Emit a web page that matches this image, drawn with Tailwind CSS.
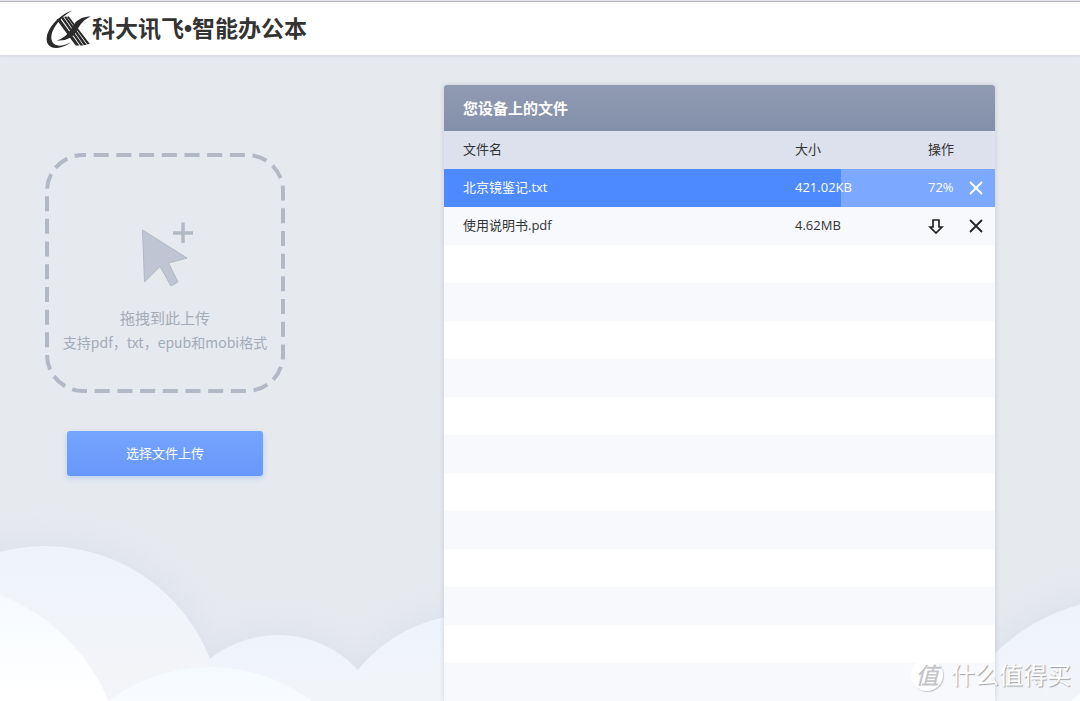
<!DOCTYPE html>
<html lang="zh-CN">
<head>
<meta charset="utf-8">
<meta name="viewport" content="width=device-width, initial-scale=1">
<title>科大讯飞•智能办公本</title>
<script src="https://cdn.jsdelivr.net/npm/@tailwindcss/browser@4"></script>
</head>
<body class="relative flex h-screen flex-col overflow-hidden bg-[#e6e9ee] pt-px font-['Open_Sans','Noto_Sans_CJK_SC',sans-serif] text-[13px] leading-5 text-[#333]">

<header class="z-10 flex h-[54px] shrink-0 items-center border-t border-[#b5b5b5] bg-white pl-[44px] shadow-[0_1px_3px_rgba(120,130,150,0.2)]">
  <a href="#" class="flex items-center">
    <svg class="h-10 w-12" viewBox="10 5 144 126" fill="#2b2b2b" aria-hidden="true">
      <path d="M96 10C62 20 28 52 17 84C9 112 22 130 48 128C64 126 80 119 92 109C74 119 54 124 42 118C26 109 26 88 38 66C50 44 70 24 96 10Z"/>
      <path d="M154 29C132 29 113 37 102 52C88 73 78 94 47 104C75 107 96 95 108 76C120 55 130 39 154 29Z"/>
      <path d="M46 38L56 34L118 120L106 120ZM60 33L67 30L130 120L121 120ZM70 30L76 28L141 118L132 119ZM79 30L84 28L151 115L143 116Z"/>
    </svg>
    <h1 class="text-[23px] font-bold leading-8">科大讯飞<span class="font-['Liberation_Sans']">•</span>智能办公本</h1>
  </a>
</header>

<svg class="absolute bottom-0 left-0 h-[160px] w-[1080px] overflow-visible" viewBox="0 541 1080 160" aria-hidden="true">
  <defs>
    <linearGradient id="back" x1="0" y1="0" x2="0" y2="1">
      <stop offset="0" stop-color="#eef3fc"/><stop offset=".2" stop-color="#f1f4f9"/><stop offset=".5" stop-color="#f4f5f8"/>
    </linearGradient>
    <linearGradient id="front" x1="0" y1="0" x2="0" y2="1">
      <stop offset="0" stop-color="#f5faff"/><stop offset=".3" stop-color="#ffffff"/>
    </linearGradient>
    <filter id="haze" x="-20%" y="-20%" width="140%" height="140%"><feGaussianBlur stdDeviation="14"/></filter>
  </defs>
  <g fill="#d9deea" opacity=".7" filter="url(#haze)">
    <circle cx="45" cy="723" r="182"/><circle cx="278" cy="744" r="114"/><circle cx="475" cy="765" r="156"/><circle cx="1130" cy="790" r="199"/>
  </g>
  <g fill="url(#back)">
    <circle cx="475" cy="765" r="151"/><circle cx="278" cy="744" r="109"/><circle cx="45" cy="723" r="177"/><circle cx="1130" cy="790" r="192"/>
  </g>
  <g fill="url(#front)">
    <circle cx="210" cy="835" r="168"/><circle cx="-72" cy="777" r="196"/><circle cx="1112" cy="737" r="54"/>
  </g>
</svg>

<main class="relative flex min-h-0 flex-1 pl-[45px] pr-[85px]">
  <section class="mr-[159px] flex w-60 shrink-0 flex-col items-center pt-[98px]">
    <div class="relative flex h-60 w-full flex-col items-center pt-[69px] text-[#a5abb8]">
      <svg class="absolute inset-0 h-full w-full" viewBox="0 0 240 240" fill="none" aria-hidden="true">
        <rect x="2" y="2" width="236" height="236" rx="36" stroke="#b3b8c5" stroke-width="4" stroke-dasharray="15 7.7" stroke-dashoffset="12"/>
      </svg>
      <svg class="h-16 w-14" viewBox="137 221 56 64" aria-hidden="true">
        <path d="M142.500 229L187 257L168.500 262L178 281L171 285L160 265.500L144.500 281Z" fill="#c0c5d3" stroke="#b3b8c6" stroke-width="1"/>
        <path d="M183 221.500V242M173 232H193.500" stroke="#b3b8c5" stroke-width="3.500"/>
      </svg>
      <p class="mt-5 text-[15px] leading-6">拖拽到此上传</p>
      <p class="whitespace-nowrap font-['Noto_Sans_CJK_SC',sans-serif] text-[14px] leading-6">支持pdf，txt，epub和mobi格式</p>
    </div>
    <button type="button" class="mt-[38px] h-[45px] w-[196px] rounded-[3px] bg-linear-to-b from-[#74a5ff] to-[#6798fb] pb-0.5 text-white shadow-[0_2px_5px_rgba(103,152,251,0.35)]">选择文件上传</button>
  </section>

  <section class="mt-[30px] flex min-w-0 flex-1 flex-col overflow-hidden rounded-t-[3px] bg-[repeating-linear-gradient(to_bottom,#ffffff_0px,#ffffff_38px,#f7f9fd_38px,#f7f9fd_76px)] bg-[position:0_8px] shadow-[0_0_5px_rgba(110,120,145,0.3)]">
    <h2 class="flex h-[46px] shrink-0 items-center bg-linear-to-b from-[#909bb2] to-[#8490aa] pl-[19px] text-[15px] font-bold text-white">您设备上的文件</h2>
    <table class="w-full table-fixed text-left">
      <thead>
        <tr class="h-[38px] bg-[#dce1ed]">
          <th scope="col" class="pb-0.5 pl-[19px] font-normal">文件名</th>
          <th scope="col" class="w-[133px] pb-0.5 font-normal">大小</th>
          <th scope="col" class="w-[67px] pb-0.5 font-normal">操作</th>
        </tr>
      </thead>
      <tbody>
        <tr class="h-[38px] text-white" style="background:linear-gradient(to right,#4d8aff 72%,#7da8ff 72%)">
          <td class="pb-0.5 pl-[19px]">北京镜鉴记.txt</td>
          <td class="pb-0.5">421.02KB</td>
          <td>
            <div class="flex items-center justify-between pr-3">
              <span class="pb-0.5">72%</span>
              <button type="button" aria-label="取消上传"><svg class="size-[14px]" viewBox="0 0 14 14" fill="none" stroke="currentColor" stroke-width="2"><path d="M1 1L13 13M13 1L1 13"/></svg></button>
            </div>
          </td>
        </tr>
        <tr class="h-[38px] bg-[#f7f9fd]">
          <td class="pb-0.5 pl-[19px]">使用说明书.pdf</td>
          <td class="pb-0.5">4.62MB</td>
          <td>
            <div class="flex items-center justify-between pr-3 text-[#222]">
              <button type="button" aria-label="下载"><svg class="h-[15px] w-4" viewBox="0 0 16 15" fill="none" stroke="currentColor" stroke-width="1.700"><path d="M5 1H11V8H14L8 14L2 8H5Z"/></svg></button>
              <button type="button" aria-label="删除"><svg class="size-[14px]" viewBox="0 0 14 14" fill="none" stroke="currentColor" stroke-width="1.800"><path d="M1 1L13 13M13 1L1 13"/></svg></button>
            </div>
          </td>
        </tr>
      </tbody>
    </table>
  </section>
</main>

<div class="absolute bottom-[10px] right-[9px] z-20 flex items-center gap-2 text-white">
  <span class="flex size-8 items-center justify-center rounded-full bg-white text-[23px] font-medium italic leading-8 text-[#c4c6cb] shadow-[1px_1px_1px_rgba(0,0,0,0.2)]">值</span>
  <span class="text-[24px] leading-8 [text-shadow:1px_1px_1px_rgba(0,0,0,0.35)]">什么值得买</span>
</div>
</body>
</html>
